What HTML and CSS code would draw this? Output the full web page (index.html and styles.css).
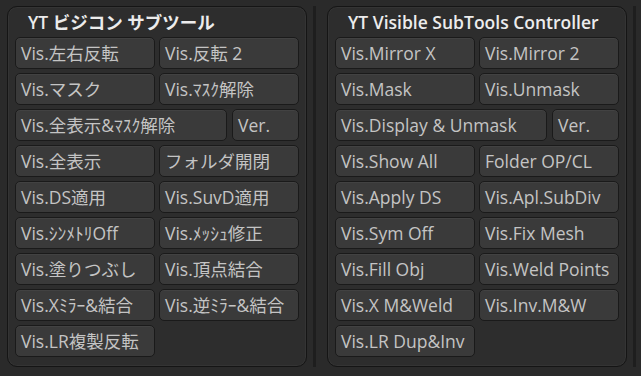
FILE: index.html
```html
<!DOCTYPE html>
<html>
  <head>
    <meta charset="utf-8">
    <link rel="stylesheet" href="styles.css">
  </head>
  <body>
    <div class="palettes">
      <div class="column">
        <div class="panel">
          <div class="title">YT ビジコン サブツール</div>
          <div class="buttons">
            <div class="btn">Vis.左右反転</div>
            <div class="btn">Vis.反転 2</div>
            <div class="btn">Vis.マスク</div>
            <div class="btn">Vis.ﾏｽｸ解除</div>
            <div class="wide-row">
              <div class="btn wide">Vis.全表示&amp;ﾏｽｸ解除</div>
              <div class="btn ver">Ver.</div>
            </div>
            <div class="btn">Vis.全表示</div>
            <div class="btn">フォルダ開閉</div>
            <div class="btn">Vis.DS適用</div>
            <div class="btn">Vis.SuvD適用</div>
            <div class="btn">Vis.ｼﾝﾒﾄﾘOff</div>
            <div class="btn">Vis.ﾒｯｼｭ修正</div>
            <div class="btn">Vis.塗りつぶし</div>
            <div class="btn">Vis.頂点結合</div>
            <div class="btn">Vis.Xﾐﾗｰ&amp;結合</div>
            <div class="btn">Vis.逆ﾐﾗｰ&amp;結合</div>
            <div class="btn">Vis.LR複製反転</div>
          </div>
        </div>
        <div class="track"></div>
      </div>
      <div class="column">
        <div class="panel">
          <div class="title">YT Visible SubTools Controller</div>
          <div class="buttons">
            <div class="btn">Vis.Mirror X</div>
            <div class="btn">Vis.Mirror 2</div>
            <div class="btn">Vis.Mask</div>
            <div class="btn">Vis.Unmask</div>
            <div class="wide-row">
              <div class="btn wide">Vis.Display &amp; Unmask</div>
              <div class="btn ver">Ver.</div>
            </div>
            <div class="btn">Vis.Show All</div>
            <div class="btn">Folder OP/CL</div>
            <div class="btn">Vis.Apply DS</div>
            <div class="btn">Vis.Apl.SubDiv</div>
            <div class="btn">Vis.Sym Off</div>
            <div class="btn">Vis.Fix Mesh</div>
            <div class="btn">Vis.Fill Obj</div>
            <div class="btn">Vis.Weld Points</div>
            <div class="btn">Vis.X M&amp;Weld</div>
            <div class="btn">Vis.Inv.M&amp;W</div>
            <div class="btn">Vis.LR Dup&amp;Inv</div>
          </div>
        </div>
        <div class="track"></div>
      </div>
    </div>
  </body>
</html>
```

FILE: styles.css
```css
html, body {
  margin: 0;
  padding: 0;
  background: #2a2a2a;
  font-family: "Open Sans", "Noto Sans CJK JP", sans-serif;
  height: 376px;
  overflow: hidden;
}
.palettes {
  display: flex;
  padding: 6px 0 0 7px;
}
.column {
  display: flex;
}
.panel {
  box-sizing: border-box;
  width: 300px;
  height: 361px;
  border: 1px solid #151515;
  border-radius: 10px;
  background: #2d2d2d;
  box-shadow: inset 0 0 0 1px #343434;
  padding: 0 7px;
}
.track {
  width: 20px;
  display: flex;
  justify-content: center;
}
.track::before {
  content: "";
  width: 3px;
  margin-right: 6px;
  background: #1e1e1e;
}
.title {
  height: 30px;
  line-height: 31px;
  padding-left: 13px;
  color: #ececec;
  font-size: 17.5px;
  font-weight: 600;
  white-space: nowrap;
}
.buttons {
  display: grid;
  grid-template-columns: 140px 140px;
  grid-auto-rows: 32px;
  gap: 4px;
}
.wide-row {
  grid-column: 1 / -1;
  display: flex;
  gap: 5px;
}
.btn {
  box-sizing: border-box;
  border: 1px solid #1a1a1a;
  border-radius: 5px;
  background: #3a3a3a;
  box-shadow: inset 0 1px 0 #424242;
  color: #c4c4c4;
  font-size: 17.5px;
  line-height: 31px;
  padding-left: 5px;
  white-space: nowrap;
  overflow: hidden;
}
.wide {
  width: 212px;
}
.ver {
  flex: 1;
}
```
